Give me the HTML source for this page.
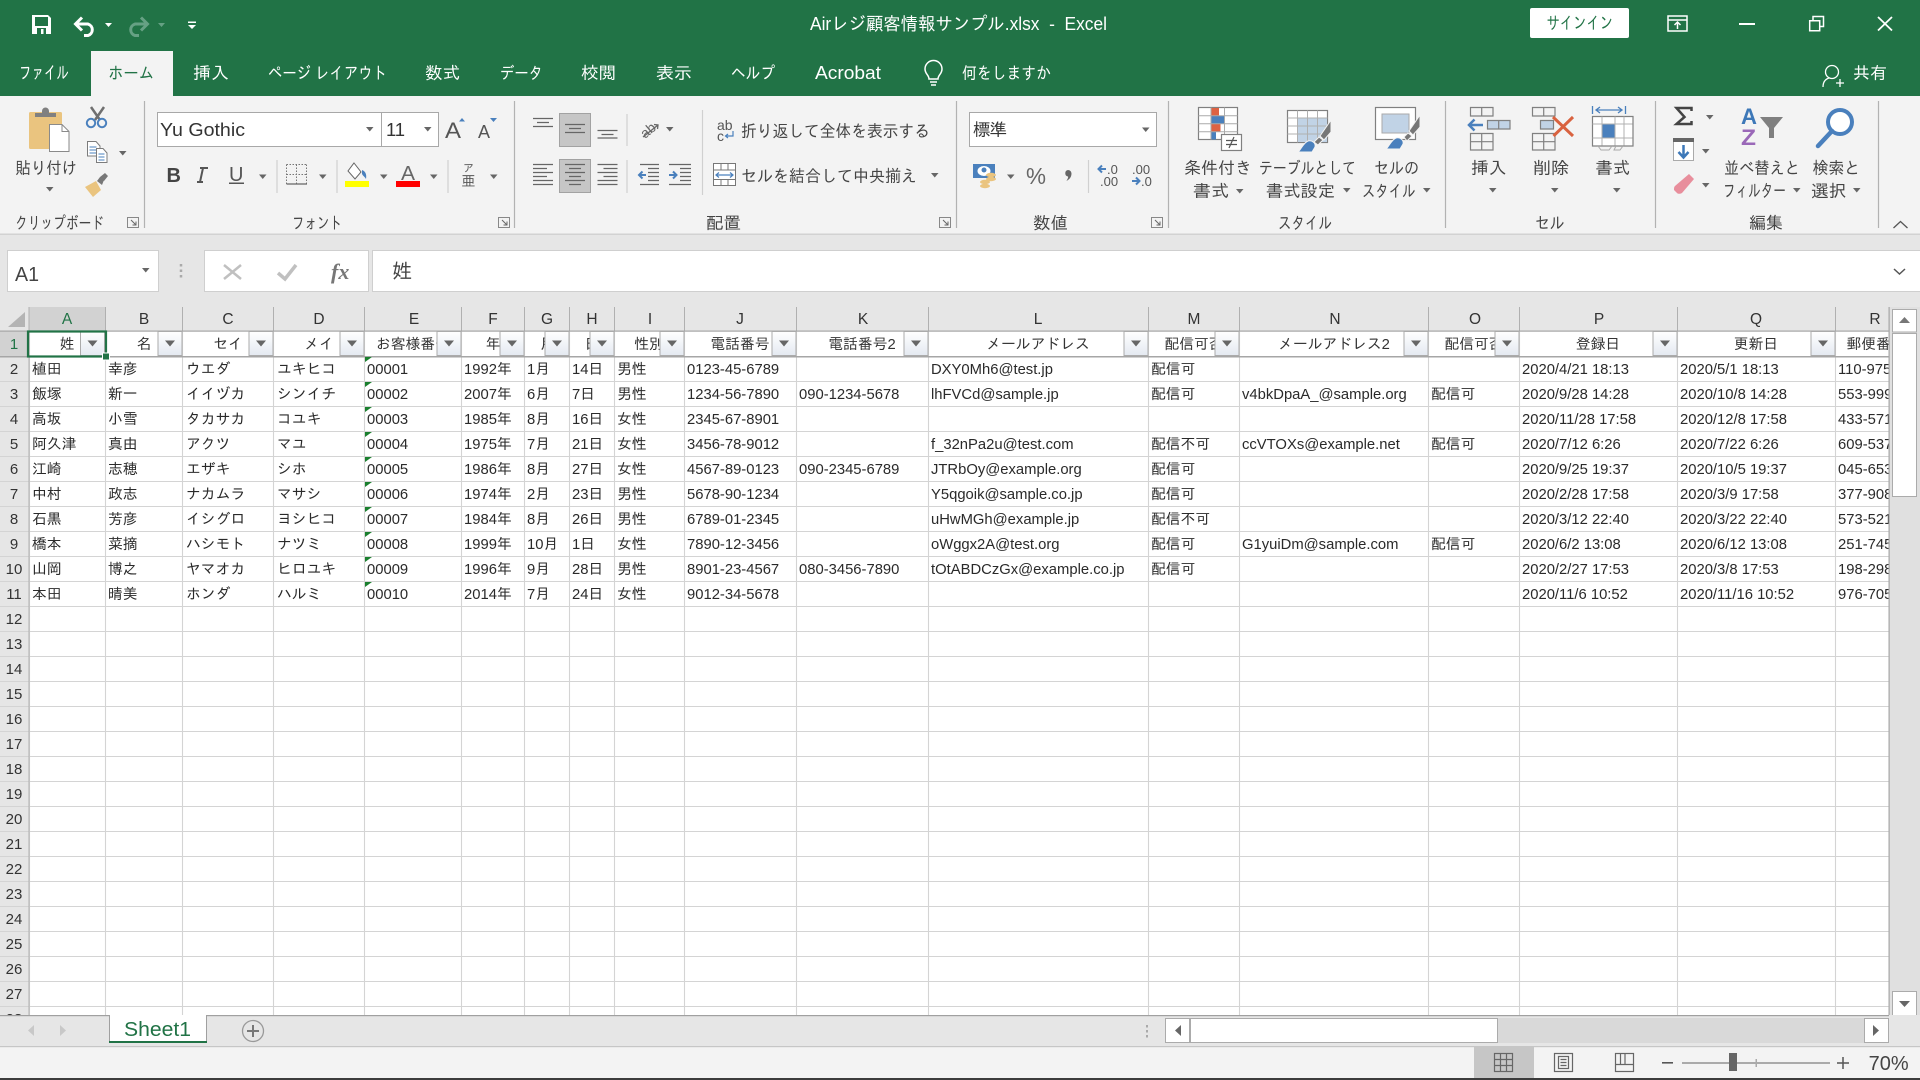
<!DOCTYPE html>
<html lang="ja"><head><meta charset="utf-8"><title>Excel</title>
<style>
html,body{margin:0;padding:0;width:1920px;height:1080px;overflow:hidden;background:#fff}
svg{display:block;position:absolute;left:0;top:0}
text{font-family:"Liberation Sans","IPAGothic","Noto Sans CJK JP",sans-serif;fill:#333}
.rb text{font-size:17px;fill:#444}
.tab text{font-size:17px;fill:#fff}
.c text{font-size:14.8px;fill:#2a2a2a}
.h text{font-size:14.8px;fill:#333;text-anchor:middle}
.ch text{font-size:15.5px;fill:#333;text-anchor:middle}
.rn text{font-size:15px;fill:#333;text-anchor:middle}
</style></head><body>
<svg xmlns="http://www.w3.org/2000/svg" width="1920" height="1080" viewBox="0 0 1920 1080">
<defs>
<path id="ar" d="M0 0h7.500l-3.750 4.500z" fill="#666"/>
<g id="fb"><rect x="0" y="0" width="24" height="24" fill="url(#fg)" stroke="#ababab"/><path d="M7 9h10l-5 6z" fill="#666"/></g>
<linearGradient id="fg" x1="0" y1="0" x2="0" y2="1"><stop offset="0" stop-color="#fff"/><stop offset="1" stop-color="#e4e9f1"/></linearGradient>
<g id="lch"><path d="M0.500 0.500H11.500V10.500H0.500Z" fill="none" stroke="#888"/><path d="M4 3l5 5M9 4.500V8H5.500" fill="none" stroke="#666"/></g>
</defs>

<!-- title + tabs -->
<rect width="1920" height="96" fill="#217346"/>
<rect x="91" y="51" width="82" height="45" fill="#f3f3f3"/>
<!-- save -->
<path d="M32 15H48L51 18V34H32Z" fill="#fff"/><rect x="35" y="17" width="13" height="9" fill="#217346"/><rect x="37" y="28" width="9" height="6" fill="#217346"/><rect x="41" y="29" width="2.500" height="5" fill="#fff"/>
<path d="M77 24H88a6 6 0 0 1 0 11.500H84M82 17.500l-6.500 6.500 6.500 6.500" fill="none" stroke="#fff" stroke-width="3"/>
<path d="M105 23h7l-3.500 4z" fill="#fff"/>
<path d="M146 24H135a6 6 0 0 0 0 11.500H139M141 17.500l6.500 6.500-6.500 6.500" fill="none" stroke="#66a184" stroke-width="3"/>
<path d="M158 23h7l-3.500 4z" fill="#66a184"/>
<path d="M188 21.500h8v1.500h-8zM188 25h8l-4 4z" fill="#fff"/>

<text x="810" y="30" font-size="18" style="fill:#fff" textLength="297" lengthAdjust="spacingAndGlyphs">Airレジ顧客情報サンプル.xlsx&#160;&#160;-&#160;&#160;Excel</text>
<rect x="1530" y="8" width="99" height="30" rx="2" fill="#fff"/>
<text x="1546.500" y="29" font-size="17.500" style="fill:#217346" textLength="66.500" lengthAdjust="spacingAndGlyphs">サインイン</text>
<rect x="1668" y="16" width="19" height="15" fill="none" stroke="#fff" stroke-width="1.500"/><path d="M1668 20h19M1677.500 29v-7M1674.500 25l3-3 3 3" fill="none" stroke="#fff" stroke-width="1.500"/>
<rect x="1739" y="23" width="16" height="2" fill="#fff"/>
<path d="M1809.700 20.700h10v10h-10zM1813 20v-3.500h10.500v10h-3.500" fill="none" stroke="#fff" stroke-width="1.500"/>
<path d="M1878 17l14 13.500M1892 17l-14 13.500" stroke="#fff" stroke-width="1.800"/>

<g class="tab">
<text x="19" y="79" textLength="50" lengthAdjust="spacingAndGlyphs" font-size="18" style="font-size:18px">ファイル</text>
<text x="108" y="79" textLength="46" lengthAdjust="spacingAndGlyphs" style="fill:#217346">ホーム</text>
<text x="193" y="79" textLength="36" lengthAdjust="spacingAndGlyphs">挿入</text>
<text x="268" y="79" textLength="119" lengthAdjust="spacingAndGlyphs">ページ レイアウト</text>
<text x="425" y="79" textLength="35" lengthAdjust="spacingAndGlyphs">数式</text>
<text x="500" y="79" textLength="43" lengthAdjust="spacingAndGlyphs">データ</text>
<text x="581" y="79" textLength="35" lengthAdjust="spacingAndGlyphs">校閲</text>
<text x="656" y="79" textLength="36" lengthAdjust="spacingAndGlyphs">表示</text>
<text x="731" y="79" textLength="44" lengthAdjust="spacingAndGlyphs">ヘルプ</text>
<text x="815" y="79" textLength="66" lengthAdjust="spacingAndGlyphs" style="font-size:18.500px">Acrobat</text>
<text x="962" y="79" textLength="89" lengthAdjust="spacingAndGlyphs">何をしますか</text>
<text x="1853" y="79" textLength="34" lengthAdjust="spacingAndGlyphs">共有</text>
</g>
<path d="M929 79c0-4-4-5-4-10a8.500 8.500 0 0 1 17 0c0 5-4 6-4 10zM930 82h7M931 85h5" fill="none" stroke="#fff" stroke-width="1.500"/>
<circle cx="1832" cy="72" r="6.500" fill="none" stroke="#fff" stroke-width="1.300"/><path d="M1823 87c0-6 3-8 6-9M1836 83h8M1840 79v8" fill="none" stroke="#fff" stroke-width="1.300"/>

<!-- ribbon -->
<rect y="96" width="1920" height="138" fill="#f3f3f3"/>
<rect y="234" width="1920" height="73" fill="#e6e6e6"/>
<rect y="233.500" width="1920" height="1.500" fill="#d2d2d2"/>
<path d="M144.500 101V228M514.500 101V228M956.500 101V228M1168.500 101V228M1445.500 101V228M1655.500 101V228M1878.500 101V228" stroke="#b2b2b2" stroke-width="1.200"/>
<g fill="none" stroke="#d0d0d0" stroke-width="1.200"><path d="M277 160V193M337 160V193M448 160V193M627 114V146M627 160V193M702.500 110V195M1088.500 160V193"/></g>

<!-- paste -->
<rect x="29" y="112" width="33" height="37" rx="1.500" fill="#eac47f"/>
<path d="M35 117v-4h7v-2a3.500 3.500 0 0 1 7 0v2h7v4z" fill="#808080"/>
<path d="M49.500 124.500H62L69 131.500V151.500H49.500Z" fill="#fff" stroke="#8a8a8a" stroke-width="1"/><path d="M62 124.500V131.500H69" fill="none" stroke="#8a8a8a"/>
<!-- scissors -->
<path d="M91 107l9 13M104 107l-9 13" stroke="#6f6f6f" stroke-width="2.500"/>
<circle cx="91" cy="123" r="4.200" fill="none" stroke="#4a80bd" stroke-width="2"/><circle cx="102" cy="123" r="4.200" fill="none" stroke="#4a80bd" stroke-width="2"/>
<!-- copy -->
<path d="M87.500 141.500H96L100 146V156H87.500Z" fill="#fff" stroke="#7c7c7c"/><path d="M89.500 147h7M89.500 150h7M89.500 153h7" stroke="#4a80bd"/>
<path d="M96.500 148.500H103L107 153V162.500H96.500Z" fill="#fff" stroke="#7c7c7c"/><path d="M98.500 154h6M98.500 157h6M98.500 160h6" stroke="#4a80bd"/>
<use href="#ar" x="119" y="151"/><use href="#ar" x="46" y="187"/>
<!-- brush -->
<path d="M85 187l11-6 5 9-8 7z" fill="#eac47f"/><path d="M97 181l3-4 4 3-2 5zM100 177l5-4 3 3-4 5z" fill="#777"/>
<g class="rb">
<text x="15.500" y="174" textLength="61.500" lengthAdjust="spacingAndGlyphs">貼り付け</text>
<text x="15" y="229" textLength="89" lengthAdjust="spacingAndGlyphs">クリップボード</text>
<text x="292" y="229" textLength="50" lengthAdjust="spacingAndGlyphs">フォント</text>
<text x="706" y="229" textLength="35" lengthAdjust="spacingAndGlyphs">配置</text>
<text x="1033" y="229" textLength="35" lengthAdjust="spacingAndGlyphs">数値</text>
<text x="1278" y="229" textLength="54" lengthAdjust="spacingAndGlyphs">スタイル</text>
<text x="1535" y="229" textLength="29.500" lengthAdjust="spacingAndGlyphs">セル</text>
<text x="1749" y="229" textLength="34" lengthAdjust="spacingAndGlyphs">編集</text>
<text x="741" y="137" textLength="189" lengthAdjust="spacingAndGlyphs">折り返して全体を表示する</text>
<text x="741" y="182" textLength="176" lengthAdjust="spacingAndGlyphs">セルを結合して中央揃え</text>
<text x="1184" y="174" textLength="68" lengthAdjust="spacingAndGlyphs">条件付き</text>
<text x="1193" y="197" textLength="36" lengthAdjust="spacingAndGlyphs">書式</text>
<text x="1259" y="174" textLength="97" lengthAdjust="spacingAndGlyphs">テーブルとして</text>
<text x="1266" y="197" textLength="69" lengthAdjust="spacingAndGlyphs">書式設定</text>
<text x="1374" y="174" textLength="45" lengthAdjust="spacingAndGlyphs">セルの</text>
<text x="1362" y="197" textLength="53.500" lengthAdjust="spacingAndGlyphs">スタイル</text>
<text x="1471" y="174" textLength="35.500" lengthAdjust="spacingAndGlyphs">挿入</text>
<text x="1533" y="174" textLength="36" lengthAdjust="spacingAndGlyphs">削除</text>
<text x="1595.500" y="174" textLength="34.500" lengthAdjust="spacingAndGlyphs">書式</text>
<text x="1724" y="174" textLength="76" lengthAdjust="spacingAndGlyphs">並べ替えと</text>
<text x="1723" y="197" textLength="63" lengthAdjust="spacingAndGlyphs" style="font-size:18px">フィルター</text>
<text x="1812.600" y="174" textLength="47.400" lengthAdjust="spacingAndGlyphs">検索と</text>
<text x="1811" y="197" textLength="35.500" lengthAdjust="spacingAndGlyphs">選択</text>
</g>
<use href="#lch" x="127" y="217"/><use href="#lch" x="498" y="217"/><use href="#lch" x="939" y="217"/><use href="#lch" x="1151" y="217"/>

<!-- font -->
<rect x="157.500" y="112.500" width="224" height="34" fill="#fff" stroke="#a8a8a8"/>
<rect x="381.500" y="112.500" width="57" height="34" fill="#fff" stroke="#a8a8a8"/>
<text x="160" y="136" font-size="18.500" style="fill:#333" textLength="85" lengthAdjust="spacingAndGlyphs">Yu Gothic</text>
<text x="386" y="136" font-size="18.500" style="fill:#333" textLength="19">11</text>
<use href="#ar" x="366" y="127"/><use href="#ar" x="424" y="127"/>
<text x="445" y="138" font-size="22" style="fill:#555" textLength="16" lengthAdjust="spacingAndGlyphs">A</text>
<text x="478" y="138" font-size="18" style="fill:#555" textLength="12" lengthAdjust="spacingAndGlyphs">A</text>
<path d="M459 121.500l3-3.500 3 3.500z" fill="#4a80bd"/><path d="M490 118h7l-3.500 4z" fill="#4a80bd"/>
<text x="166.500" y="182" font-size="20" font-weight="700" style="fill:#444">B</text>
<path d="M200 182l3-14h4.500M197 182h6M200 168h8" fill="none" stroke="#555" stroke-width="2"/>
<text x="229" y="181" font-size="20" style="fill:#555">U</text><rect x="229" y="182.500" width="15" height="1.500" fill="#555"/>
<use href="#ar" x="259" y="174.500"/><use href="#ar" x="319" y="174.500"/><use href="#ar" x="380" y="174.500"/><use href="#ar" x="430" y="174.500"/><use href="#ar" x="490" y="174.500"/>
<path d="M286.500 164.500h20M286.500 174.500h20M296.500 164.500v20M286.500 164.500v20M306.500 164.500v20" fill="none" stroke="#777" stroke-dasharray="1.500 1.500"/><path d="M286.500 184h20.500" stroke="#666" stroke-width="1.300"/>
<path d="M354 163l7 9-6 7-7-8z" fill="#fff" stroke="#666"/><path d="M362 170c3 1 5 4 4 9-1-2-3-3-4-5z" fill="#4a80bd"/>
<rect x="345" y="181" width="24" height="6" fill="#ffff00"/>
<text x="401" y="180" font-size="20" style="fill:#666" textLength="14" lengthAdjust="spacingAndGlyphs">A</text>
<rect x="396" y="181" width="24" height="6" fill="#f00"/>
<text x="463" y="172" font-size="11" style="fill:#555">ア</text><text x="461.500" y="186" font-size="14" style="fill:#555">亜</text>

<!-- align -->
<rect x="559.500" y="113.500" width="31" height="33" fill="#c6c6c6" stroke="#a2a2a2"/>
<rect x="559.500" y="159.500" width="31" height="33" fill="#c6c6c6" stroke="#a2a2a2"/>
<g stroke="#666" stroke-width="1.200">
<path d="M533 118.500h20M537 122.500h12M533 126.500h20"/>
<path d="M565 124.500h20M569 128.500h12M565 132.500h20"/>
<path d="M597.500 130.500h20M601.500 134.500h12M597.500 138h20"/>
<path d="M533 164.500h20M533 168.500h14M533 172.500h20M533 176.500h14M533 180.500h20M533 184.500h20"/>
<path d="M565 164.500h20M569 168.500h12M565 172.500h20M569 176.500h12M565 180.500h20M569 184.500h12"/>
<path d="M597.500 164.500h20M603.500 168.500h14M597.500 172.500h20M603.500 176.500h14M597.500 180.500h20M597.500 184.500h20"/>
<path d="M640 164.500h19M648 168.500h11M648 172.500h11M648 176.500h11M648 180.500h11M640 184.500h19"/>
<path d="M669 164.500h22M680 168.500h11M680 172.500h11M680 176.500h11M680 180.500h11M669 184.500h22"/>
</g>
<path d="M646 175h-6M642.500 171.500l-3.500 3.500 3.500 3.500" fill="none" stroke="#4a80bd" stroke-width="2"/>
<path d="M669 175h7M673 171.500l3.500 3.500-3.500 3.500" fill="none" stroke="#4a80bd" stroke-width="2"/>
<text x="640" y="135" font-size="14" style="fill:#666" transform="rotate(-40 648 130)">ab</text><path d="M643 137l15-12M654 124.500l4 .5-.5 4" stroke="#666" fill="none" stroke-width="1.300"/>
<use href="#ar" x="666" y="127"/>
<text x="717" y="130" font-size="14" style="fill:#555">ab</text><text x="717" y="141" font-size="14" style="fill:#555">c</text>
<path d="M733 131v5h-7M728 134l-2.500 2 2.500 2" fill="none" stroke="#4a80bd" stroke-width="1.200"/>
<rect x="713.500" y="163.500" width="22" height="22" fill="#fff" stroke="#777"/>
<path d="M713.500 170h22M713.500 179.500h22M721 163.500v6M728 163.500v6M721 179.500v6M728 179.500v6" stroke="#777"/>
<path d="M716 175h17M719 172.500l-3 2.500 3 2.500M730 172.500l3 2.500-3 2.500" fill="none" stroke="#4a80bd" stroke-width="1.200"/>
<use href="#ar" x="931" y="173"/>

<!-- number -->
<rect x="969.500" y="112.500" width="187" height="34" fill="#fff" stroke="#a8a8a8"/>
<text x="973" y="136" font-size="17.500" style="fill:#333" textLength="34">標準</text>
<use href="#ar" x="1142" y="127.500"/>
<rect x="973" y="164" width="22" height="14" fill="#4a80bd"/><ellipse cx="984" cy="171" rx="6.500" ry="5" fill="#fff"/><circle cx="984" cy="170" r="2.500" fill="#4a80bd"/>
<ellipse cx="991" cy="175" rx="5" ry="2.200" fill="#eac47f"/><ellipse cx="991" cy="179" rx="5" ry="2.200" fill="#eac47f"/><ellipse cx="985" cy="182" rx="5" ry="2.200" fill="#eac47f"/><ellipse cx="985" cy="186" rx="5" ry="2.200" fill="#eac47f"/>
<use href="#ar" x="1007" y="174.500"/>
<text x="1026" y="184" font-size="23" style="fill:#666" textLength="20" lengthAdjust="spacingAndGlyphs">%</text>
<path d="M1068 170a3.500 3.500 0 0 1 3.500 3.500c0 4-2.500 6-5 7.500 1-2 2-3.500 1.500-4.500a3.300 3.300 0 0 1 0-6.500z" fill="#666"/>
<text x="1107" y="174" font-size="13" style="fill:#555">.0</text><text x="1100" y="186" font-size="13" style="fill:#555">.00</text>
<text x="1132" y="174" font-size="13" style="fill:#555">.00</text><text x="1141" y="186" font-size="13" style="fill:#555">.0</text>
<path d="M1106 169h-7M1102 165.500l-3.500 3.500 3.500 3.500" fill="none" stroke="#4a80bd" stroke-width="2"/>
<path d="M1132 181h7M1136 177.500l3.500 3.500-3.500 3.500" fill="none" stroke="#4a80bd" stroke-width="2"/>

<!-- conditional format -->
<rect x="1198.500" y="107.500" width="39" height="32" fill="#fff" stroke="#808080" stroke-width="1.200"/>
<rect x="1211" y="108" width="8" height="7.500" fill="#dd6243"/><rect x="1211" y="116" width="13" height="7.500" fill="#4a80bd"/><rect x="1211" y="124" width="9.500" height="7.500" fill="#dd6243"/><rect x="1211" y="132" width="5" height="7.500" fill="#4a80bd"/>
<path d="M1198.500 115.700h39M1198.500 123.700h39M1198.500 131.700h39M1211 107.500v32M1224.500 107.500v32" stroke="#aaa" stroke-width="1" fill="none"/>
<rect x="1221.500" y="134.500" width="20" height="16" fill="#fff" stroke="#808080" stroke-width="1.200"/><path d="M1226 140.500h11M1226 144.500h11M1234 137l-5 11" stroke="#555" fill="none" stroke-width="1.200"/>
<use href="#ar" x="1236" y="189"/>

<!-- table format -->
<rect x="1287.500" y="110.500" width="40" height="32" fill="#fff" stroke="#808080" stroke-width="1.200"/>
<rect x="1297" y="118" width="30" height="24" fill="#c1d3e6"/>
<path d="M1287.500 118h40M1287.500 126h40M1287.500 134h40M1297.500 110.500v32M1307.500 110.500v32M1317.500 110.500v32" stroke="#b0b0b0" fill="none"/>
<path d="M1298 152c3-2 5-9 10-11 4-1 8 2 7 6l-3 5z" fill="#4a80bd" stroke="#f3f3f3"/><path d="M1314 142l5-5 4 3-5 5zM1320 136l11-16v12l-7 8z" fill="#777" stroke="#f3f3f3"/>
<use href="#ar" x="1343" y="188"/>
<!-- cell style -->
<rect x="1375.500" y="107.500" width="40" height="32" fill="#fff" stroke="#808080" stroke-width="1.200"/>
<rect x="1382" y="114" width="27" height="19" fill="#c1d3e6" stroke="#aaa"/>
<path d="M1386 149c3-2 5-9 10-11 4-1 8 2 7 6l-3 5z" fill="#4a80bd" stroke="#f3f3f3"/><path d="M1404 137l4-4 4 3-5 5zM1409 131l11-16v12l-7 8z" fill="#777" stroke="#f3f3f3"/>
<use href="#ar" x="1423" y="188"/>

<!-- insert -->
<g fill="none" stroke="#808080" stroke-width="1.200">
<path d="M1470.500 107.500h22.500v8.500h-22.500zM1481.700 107.500v8.500"/>
<path d="M1470.500 133.500h22.500v16.500h-22.500zM1481.700 133.500v16.500M1470.500 141.700h22.500"/>
<path d="M1487.500 120.500h22.500v8.500h-22.500zM1498.700 120.500v8.500" fill="#c1d3e6"/>
<path d="M1532.500 107.500h22.500v8.500h-22.500zM1543.700 107.500v8.500"/>
<path d="M1532.500 133.500h22.500v16.500h-22.500zM1543.700 133.500v16.500M1532.500 141.700h22.500"/>
<path d="M1540.500 120.500h13v8.500h-13z" fill="#c1d3e6"/>
</g>
<path d="M1483 125h-14M1474.500 119.500l-5.500 5.500 5.500 5.500" fill="none" stroke="#4a80bd" stroke-width="2.500"/>
<path d="M1553 117l20 19M1573 117l-19.500 19" stroke="#d9623f" stroke-width="3"/>
<use href="#ar" x="1489" y="188"/><use href="#ar" x="1551" y="188"/><use href="#ar" x="1613" y="188"/>
<!-- format -->
<path d="M1592.500 106v8M1625.500 106v8M1596 110h26M1600 107l-4 3 4 3M1618 107l4 3-4 3" fill="none" stroke="#4a80bd" stroke-width="1.300"/>
<path d="M1592.500 116.500H1633V146H1592.500Z" fill="#fff" stroke="#808080" stroke-width="1.200"/>
<rect x="1602" y="124" width="13" height="14" fill="#4a80bd"/>
<path d="M1592.500 124h40M1592.500 138h40M1602 116.500v29M1615 116.500v29M1624 116.500v29" stroke="#b0b0b0" fill="none"/>
<path d="M1598 146l3 4h8l3-4M1616 146l-2 4h6l3-4" fill="none" stroke="#aaa"/>

<!-- editing -->
<path d="M1691.500 111v-3h-15l8 9-8 7h15v-3" fill="none" stroke="#444" stroke-width="2.500"/>
<use href="#ar" x="1706" y="115"/>
<rect x="1673.500" y="138.500" width="20" height="22" fill="#fff" stroke="#aaa"/><rect x="1673" y="138" width="21" height="4" fill="#666"/>
<path d="M1683.500 145v12M1678.500 152l5 5.500 5-5.500" fill="none" stroke="#3d78b8" stroke-width="2.500"/>
<use href="#ar" x="1702" y="149"/>
<path d="M1689 174l5 5-12 14c-2 1-4 1-5 0l-3-3c0-2 0-3 1-4z" fill="#e88e9c"/>
<use href="#ar" x="1702" y="183"/>
<text x="1741" y="124" font-size="22" font-weight="700" style="fill:#3d78b8" textLength="16" lengthAdjust="spacingAndGlyphs">A</text>
<text x="1741" y="145" font-size="22" font-weight="700" style="fill:#9a68b8" textLength="15" lengthAdjust="spacingAndGlyphs">Z</text>
<path d="M1760 117h23l-9 11v10h-5v-10z" fill="#7f7f7f"/>
<use href="#ar" x="1793" y="188"/>
<circle cx="1840" cy="122" r="12" fill="#fff" stroke="#4a80bd" stroke-width="4"/><path d="M1832 131l-14 15" stroke="#4a80bd" stroke-width="4.500" stroke-linecap="round"/>
<use href="#ar" x="1853" y="188"/>
<path d="M1893.500 228l7-6.500 7 6.500" fill="none" stroke="#555" stroke-width="1.300"/>

<!-- formula bar -->
<rect x="7.500" y="250.500" width="151" height="41" fill="#fff" stroke="#cfcfcf"/>
<text x="15" y="281" font-size="20" style="fill:#444" textLength="24" lengthAdjust="spacingAndGlyphs">A1</text>
<use href="#ar" x="142" y="268"/>
<path d="M181 264v2.500M181 269.500v2.500M181 275v2.500" stroke="#aaa" stroke-width="2.500"/>
<rect x="204.500" y="250.500" width="164" height="41" fill="#fff" stroke="#cfcfcf"/>
<rect x="372.500" y="250.500" width="1548" height="41" fill="#fff" stroke="#cfcfcf"/>
<path d="M224 265l17 14M241 265l-17 14" stroke="#c0c0c0" stroke-width="2.500"/>
<path d="M278 273l7 6 11-14" fill="none" stroke="#c0c0c0" stroke-width="3.500"/>
<text x="331" y="279" font-size="22" font-style="italic" font-weight="700" style="fill:#777;font-family:'Liberation Serif',serif">fx</text>
<text x="392" y="278" font-size="20" style="fill:#444">姓</text>
<path d="M1894 269l5.500 5 5.500-5" fill="none" stroke="#555" stroke-width="1.500"/>

<!-- grid -->
<rect y="307" width="1920" height="708" fill="#fff"/>
<rect y="307" width="1920" height="24" fill="#e6e6e6"/>
<rect y="331" width="29" height="684" fill="#e6e6e6"/>
<rect x="29" y="307" width="76" height="24" fill="#d2d2d2"/>
<rect y="331" width="29" height="25" fill="#d2d2d2"/>
<path d="M25 312v15H8z" fill="#b4b4b4"/>
<path d="M29.500 331V1015M105.500 357V1015M182.500 331V1015M273.500 331V1015M364.500 331V1015M461.500 331V1015M524.500 331V1015M569.500 331V1015M614.500 331V1015M684.500 331V1015M796.500 331V1015M928.500 331V1015M1148.500 331V1015M1239.500 331V1015M1428.500 331V1015M1519.500 331V1015M1677.500 331V1015M1835.500 331V1015" stroke="#d4d4d4" fill="none" stroke-width="1.100"/>
<path d="M0 381.500H1889M0 406.500H1889M0 431.500H1889M0 456.500H1889M0 481.500H1889M0 506.500H1889M0 531.500H1889M0 556.500H1889M0 581.500H1889M0 606.500H1889M0 631.500H1889M0 656.500H1889M0 681.500H1889M0 706.500H1889M0 731.500H1889M0 756.500H1889M0 781.500H1889M0 806.500H1889M0 831.500H1889M0 856.500H1889M0 881.500H1889M0 906.500H1889M0 931.500H1889M0 956.500H1889M0 981.500H1889M0 1006.500H1889" stroke="#d4d4d4" fill="none" stroke-width="1.100"/>
<path d="M105.500 307V331M182.500 307V331M273.500 307V331M364.500 307V331M461.500 307V331M524.500 307V331M569.500 307V331M614.500 307V331M684.500 307V331M796.500 307V331M928.500 307V331M1148.500 307V331M1239.500 307V331M1428.500 307V331M1519.500 307V331M1677.500 307V331M1835.500 307V331" stroke="#b0b0b0" fill="none"/>
<rect x="0" y="330.500" width="1889" height="1.200" fill="#a6a6a6"/>
<rect x="0" y="356" width="1889" height="1.500" fill="#a6a6a6"/>
<rect x="28.500" y="307" width="1" height="708" fill="#b0b0b0"/>

<g class="ch">
<text x="67" y="324" style="fill:#217346">A</text><text x="144" y="324">B</text><text x="228" y="324">C</text><text x="319" y="324">D</text><text x="414" y="324">E</text><text x="493" y="324">F</text><text x="547" y="324">G</text><text x="592" y="324">H</text><text x="650" y="324">I</text><text x="740" y="324">J</text><text x="863" y="324">K</text><text x="1038" y="324">L</text><text x="1194" y="324">M</text><text x="1335" y="324">N</text><text x="1475" y="324">O</text><text x="1599" y="324">P</text><text x="1756" y="324">Q</text><text x="1875" y="324">R</text>
</g>

<g class="h">
<text x="67" y="349">姓</text><text x="144" y="349">名</text><text x="228" y="349">セイ</text><text x="319" y="349">メイ</text><text x="413" y="349">お客様番号</text><text x="493" y="349">年</text><text x="547" y="349">月</text><text x="592" y="349">日</text><text x="649" y="349">性別</text><text x="740" y="349">電話番号</text><text x="862" y="349">電話番号2</text><text x="1038" y="349">メールアドレス</text><text x="1194" y="349">配信可否</text><text x="1334" y="349">メールアドレス2</text><text x="1474" y="349">配信可否</text><text x="1598" y="349">登録日</text><text x="1756" y="349">更新日</text><text x="1876" y="349">郵便番号</text>
</g>
<use href="#fb" x="80.500" y="331.500"/><use href="#fb" x="158" y="331.500"/><use href="#fb" x="249" y="331.500"/><use href="#fb" x="340" y="331.500"/><use href="#fb" x="437" y="331.500"/><use href="#fb" x="500" y="331.500"/><use href="#fb" x="545" y="331.500"/><use href="#fb" x="590" y="331.500"/><use href="#fb" x="660" y="331.500"/><use href="#fb" x="772" y="331.500"/><use href="#fb" x="904" y="331.500"/><use href="#fb" x="1124" y="331.500"/><use href="#fb" x="1215" y="331.500"/><use href="#fb" x="1404" y="331.500"/><use href="#fb" x="1495" y="331.500"/><use href="#fb" x="1653" y="331.500"/><use href="#fb" x="1811" y="331.500"/>

<g class="rn">
<text x="14" y="349" style="fill:#217346">1</text><text x="14" y="374">2</text><text x="14" y="399">3</text><text x="14" y="424">4</text><text x="14" y="449">5</text><text x="14" y="474">6</text><text x="14" y="499">7</text><text x="14" y="524">8</text><text x="14" y="549">9</text><text x="14" y="574">10</text><text x="14" y="599">11</text><text x="14" y="624">12</text><text x="14" y="649">13</text><text x="14" y="674">14</text><text x="14" y="699">15</text><text x="14" y="724">16</text><text x="14" y="749">17</text><text x="14" y="774">18</text><text x="14" y="799">19</text><text x="14" y="824">20</text><text x="14" y="849">21</text><text x="14" y="874">22</text><text x="14" y="899">23</text><text x="14" y="924">24</text><text x="14" y="949">25</text><text x="14" y="974">26</text><text x="14" y="999">27</text><text x="14" y="1024">28</text>
</g>
<path d="M365 357h7l-7 5zM365 382h7l-7 5zM365 407h7l-7 5zM365 432h7l-7 5zM365 457h7l-7 5zM365 482h7l-7 5zM365 507h7l-7 5zM365 532h7l-7 5zM365 557h7l-7 5zM365 582h7l-7 5z" fill="#1a7f2e"/>

<g class="c">
<g transform="translate(0,374)"><text x="32">植田</text><text x="108">幸彦</text><text x="186">ウエダ</text><text x="277">ユキヒコ</text><text x="367">00001</text><text x="464">1992年</text><text x="527">1月</text><text x="572">14日</text><text x="617">男性</text><text x="687">0123-45-6789</text><text x="931">DXY0Mh6@test.jp</text><text x="1151">配信可</text><text x="1522">2020/4/21 18:13</text><text x="1680">2020/5/1 18:13</text><text x="1838">110-9750</text></g>
<g transform="translate(0,399)"><text x="32">飯塚</text><text x="108">新一</text><text x="186">イイヅカ</text><text x="277">シンイチ</text><text x="367">00002</text><text x="464">2007年</text><text x="527">6月</text><text x="572">7日</text><text x="617">男性</text><text x="687">1234-56-7890</text><text x="799">090-1234-5678</text><text x="931">lhFVCd@sample.jp</text><text x="1151">配信可</text><text x="1242">v4bkDpaA_@sample.org</text><text x="1431">配信可</text><text x="1522">2020/9/28 14:28</text><text x="1680">2020/10/8 14:28</text><text x="1838">553-9990</text></g>
<g transform="translate(0,424)"><text x="32">高坂</text><text x="108">小雪</text><text x="186">タカサカ</text><text x="277">コユキ</text><text x="367">00003</text><text x="464">1985年</text><text x="527">8月</text><text x="572">16日</text><text x="617">女性</text><text x="687">2345-67-8901</text><text x="1522">2020/11/28 17:58</text><text x="1680">2020/12/8 17:58</text><text x="1838">433-5710</text></g>
<g transform="translate(0,449)"><text x="32">阿久津</text><text x="108">真由</text><text x="186">アクツ</text><text x="277">マユ</text><text x="367">00004</text><text x="464">1975年</text><text x="527">7月</text><text x="572">21日</text><text x="617">女性</text><text x="687">3456-78-9012</text><text x="931">f_32nPa2u@test.com</text><text x="1151">配信不可</text><text x="1242">ccVTOXs@example.net</text><text x="1431">配信可</text><text x="1522">2020/7/12 6:26</text><text x="1680">2020/7/22 6:26</text><text x="1838">609-5370</text></g>
<g transform="translate(0,474)"><text x="32">江崎</text><text x="108">志穂</text><text x="186">エザキ</text><text x="277">シホ</text><text x="367">00005</text><text x="464">1986年</text><text x="527">8月</text><text x="572">27日</text><text x="617">女性</text><text x="687">4567-89-0123</text><text x="799">090-2345-6789</text><text x="931">JTRbOy@example.org</text><text x="1151">配信可</text><text x="1522">2020/9/25 19:37</text><text x="1680">2020/10/5 19:37</text><text x="1838">045-6530</text></g>
<g transform="translate(0,499)"><text x="32">中村</text><text x="108">政志</text><text x="186">ナカムラ</text><text x="277">マサシ</text><text x="367">00006</text><text x="464">1974年</text><text x="527">2月</text><text x="572">23日</text><text x="617">男性</text><text x="687">5678-90-1234</text><text x="931">Y5qgoik@sample.co.jp</text><text x="1151">配信可</text><text x="1522">2020/2/28 17:58</text><text x="1680">2020/3/9 17:58</text><text x="1838">377-9080</text></g>
<g transform="translate(0,524)"><text x="32">石黒</text><text x="108">芳彦</text><text x="186">イシグロ</text><text x="277">ヨシヒコ</text><text x="367">00007</text><text x="464">1984年</text><text x="527">8月</text><text x="572">26日</text><text x="617">男性</text><text x="687">6789-01-2345</text><text x="931">uHwMGh@example.jp</text><text x="1151">配信不可</text><text x="1522">2020/3/12 22:40</text><text x="1680">2020/3/22 22:40</text><text x="1838">573-5210</text></g>
<g transform="translate(0,549)"><text x="32">橋本</text><text x="108">菜摘</text><text x="186">ハシモト</text><text x="277">ナツミ</text><text x="367">00008</text><text x="464">1999年</text><text x="527">10月</text><text x="572">1日</text><text x="617">女性</text><text x="687">7890-12-3456</text><text x="931">oWggx2A@test.org</text><text x="1151">配信可</text><text x="1242">G1yuiDm@sample.com</text><text x="1431">配信可</text><text x="1522">2020/6/2 13:08</text><text x="1680">2020/6/12 13:08</text><text x="1838">251-7450</text></g>
<g transform="translate(0,574)"><text x="32">山岡</text><text x="108">博之</text><text x="186">ヤマオカ</text><text x="277">ヒロユキ</text><text x="367">00009</text><text x="464">1996年</text><text x="527">9月</text><text x="572">28日</text><text x="617">男性</text><text x="687">8901-23-4567</text><text x="799">080-3456-7890</text><text x="931">tOtABDCzGx@example.co.jp</text><text x="1151">配信可</text><text x="1522">2020/2/27 17:53</text><text x="1680">2020/3/8 17:53</text><text x="1838">198-2980</text></g>
<g transform="translate(0,599)"><text x="32">本田</text><text x="108">晴美</text><text x="186">ホンダ</text><text x="277">ハルミ</text><text x="367">00010</text><text x="464">2014年</text><text x="527">7月</text><text x="572">24日</text><text x="617">女性</text><text x="687">9012-34-5678</text><text x="1522">2020/11/6 10:52</text><text x="1680">2020/11/16 10:52</text><text x="1838">976-7050</text></g>
</g>

<!-- selection -->
<rect x="28" y="331.500" width="78" height="25" fill="none" stroke="#217346" stroke-width="2.200"/>
<rect x="102.500" y="353" width="7" height="7" fill="#217346" stroke="#fff"/>

<!-- v scrollbar -->
<rect x="1889" y="307" width="31" height="708" fill="#e0e0e0"/>
<rect x="1888.500" y="307" width="1.200" height="708" fill="#a6a6a6"/>
<rect x="1892.500" y="309.500" width="24" height="22.500" fill="#fff" stroke="#ababab"/>
<path d="M1899 323l5.500-6 5.500 6z" fill="#777"/>
<rect x="1892.500" y="333.500" width="24" height="163" fill="#fff" stroke="#ababab"/>
<rect x="1892.500" y="991.500" width="24" height="24" fill="#fff" stroke="#ababab"/>
<path d="M1899 1001h11l-5.500 6z" fill="#666"/>

<!-- tab bar -->
<rect y="1015" width="1920" height="31" fill="#e6e6e6"/>
<rect y="1015" width="1889" height="1.200" fill="#a0a0a0"/>
<path d="M34 1025v11l-6-5.500z" fill="#c8c8c8"/><path d="M60 1025v11l6-5.500z" fill="#c8c8c8"/>
<rect x="109" y="1015" width="97.500" height="28" fill="#fff"/>
<path d="M109.500 1015V1043M206.500 1015V1043" stroke="#a0a0a0"/>
<rect x="109" y="1041" width="98" height="2" fill="#217346"/>
<text x="124" y="1036" font-size="20" style="fill:#217346" textLength="67" lengthAdjust="spacingAndGlyphs">Sheet1</text>
<circle cx="253" cy="1031" r="10.500" fill="none" stroke="#999" stroke-width="1.300"/><path d="M247 1031h12M253 1025v12" stroke="#777" stroke-width="2"/>
<path d="M1147 1025v2.500M1147 1030v2.500M1147 1035v2.500" stroke="#aaa" stroke-width="2"/>
<rect x="1165" y="1018" width="723" height="25" fill="#d9d9d9"/>
<rect x="1165.500" y="1018.500" width="24" height="24" fill="#fff" stroke="#ababab"/><path d="M1181 1025v11l-6-5.500z" fill="#666"/>
<rect x="1190.500" y="1018.500" width="307" height="24" fill="#fff" stroke="#ababab"/>
<rect x="1864.500" y="1018.500" width="24" height="24" fill="#fff" stroke="#ababab"/><path d="M1873 1025v11l6-5.500z" fill="#666"/>

<!-- status bar -->
<rect y="1046" width="1920" height="32" fill="#f3f3f3"/>
<rect y="1046" width="1920" height="1.200" fill="#c6c6c6"/>
<rect y="1078" width="1920" height="2" fill="#3c3c3c"/>
<rect x="1474" y="1046" width="60" height="32" fill="#c6c6c6"/>
<g fill="none" stroke="#666" stroke-width="1.200">
<rect x="1494.500" y="1053.500" width="18" height="18"/><path d="M1500.500 1053.500v18M1506.500 1053.500v18M1494.500 1059.500h18M1494.500 1065.500h18"/>
<rect x="1554.500" y="1053.500" width="18" height="18"/><rect x="1558.500" y="1056.500" width="10" height="12"/><path d="M1560.500 1059.500h6M1560.500 1062.500h6M1560.500 1065.500h6"/>
<rect x="1615.500" y="1053.500" width="18" height="18"/><path d="M1615.500 1064.500h9.500V1053.500M1620.500 1053.500v11M1615.500 1064.500h18"/>
</g>
<rect x="1662" y="1062" width="11" height="1.600" fill="#555"/>
<rect x="1682" y="1062" width="148" height="2" fill="#aaa"/>
<rect x="1755.500" y="1059" width="1.500" height="8" fill="#aaa"/>
<rect x="1729" y="1053" width="8" height="18" fill="#666"/>
<path d="M1837 1063h12M1843 1057v12" stroke="#555" stroke-width="1.500"/>
<text x="1868.600" y="1070" font-size="20" style="fill:#444" textLength="40" lengthAdjust="spacingAndGlyphs">70%</text>
</svg>
</body></html>
